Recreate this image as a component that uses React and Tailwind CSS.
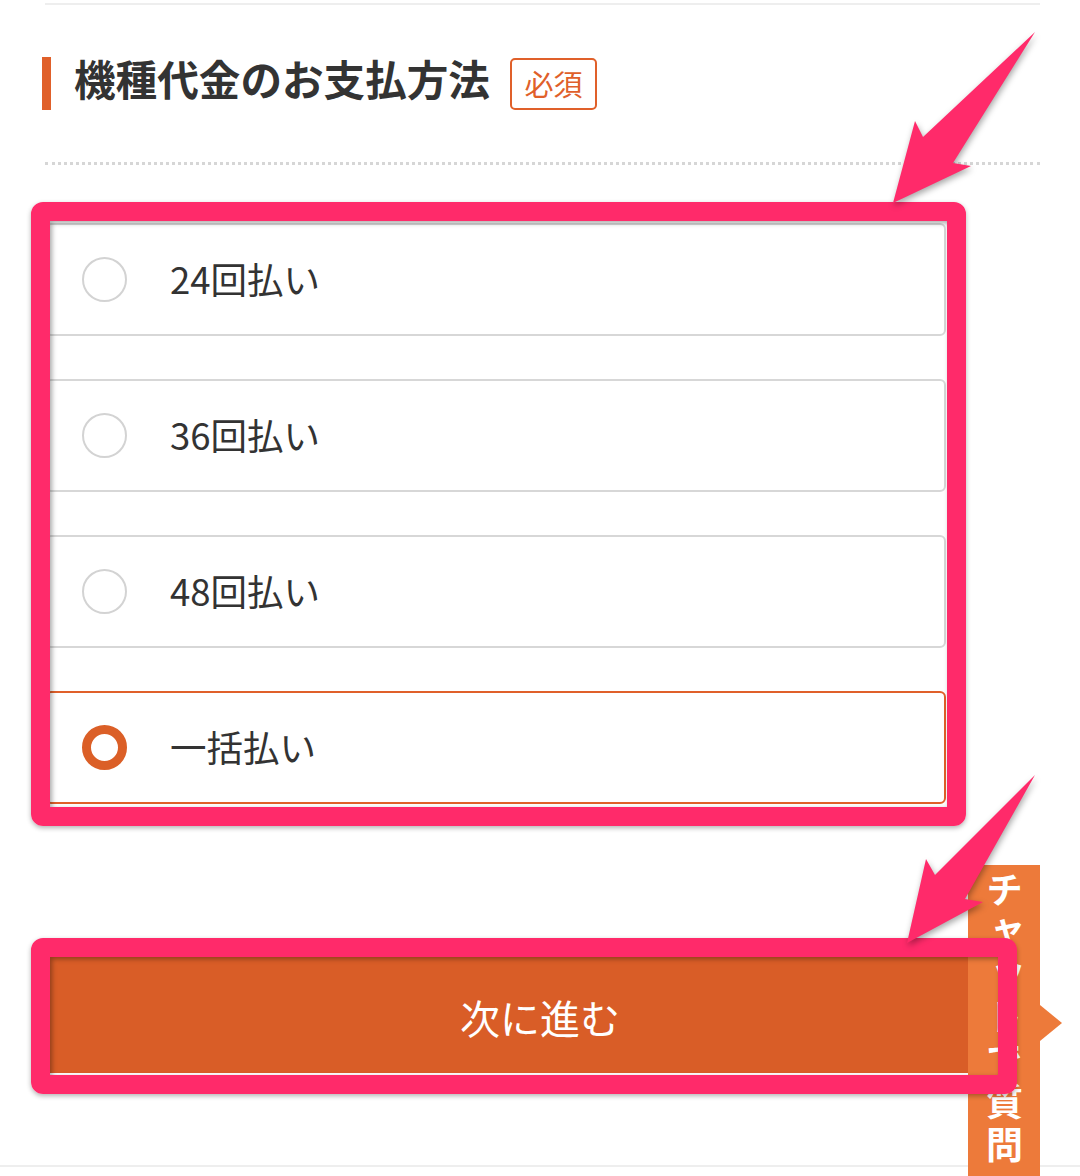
import React from "react";

const options = [
  { label: "24回払い", selected: false },
  { label: "36回払い", selected: false },
  { label: "48回払い", selected: false },
  { label: "一括払い", selected: true },
];

function Arrow({ points, className }) {
  return (
    <svg
      className={className}
      width="1080"
      height="1176"
      viewBox="0 0 1080 1176"
      style={{ filter: "drop-shadow(1px 3px 3px rgba(0,0,0,0.35))" }}
    >
      <polygon points={points} fill="#FF2A6A" />
    </svg>
  );
}

export default function App() {
  return (
    <div
      className="relative w-[1080px] h-[1176px] bg-white overflow-hidden text-[#333]"
      style={{ fontFamily: '"Noto Sans CJK JP", "Noto Sans", sans-serif' }}
    >
      {/* top rule */}
      <div className="ml-[45px] mr-[40px] mt-[3px] border-t-2 border-[#eeeeee]" />

      {/* header */}
      <div className="flex items-center ml-[42px] mt-[52px] h-[53px]">
        <div className="w-[9px] h-[53px] bg-[#E0602A]" />
        <h2 className="ml-[23px] mb-[10px] text-[41.6px] leading-none font-bold text-[#333]">
          機種代金のお支払方法
        </h2>
        <span className="ml-[20px] flex items-center justify-center w-[87px] h-[52px] border-2 border-[#E0602A] rounded-[5px] text-[29px] leading-none text-[#E0602A]">
          必須
        </span>
      </div>

      {/* dotted line */}
      <div className="ml-[45px] mr-[40px] mt-[52px] border-t-[3px] border-dotted border-[#d6d6d6]" />

      {/* options */}
      <div className="ml-[45px] mr-[134px] mt-[58px] flex flex-col gap-[43px]">
        {options.map((o) => (
          <label
            key={o.label}
            className={`flex items-center h-[113px] bg-white rounded-[6px] border-2 pl-[35px] ${
              o.selected ? "border-[#E0602A]" : "border-[#d7d7d7]"
            }`}
          >
            {o.selected ? (
              <span className="w-[45px] h-[45px] rounded-full border-[9px] border-[#DB5F27] bg-white" />
            ) : (
              <span className="w-[45px] h-[45px] rounded-full border-2 border-[#d3d3d3] bg-white" />
            )}
            <span className="ml-[43px] text-[36.5px] leading-none text-[#333]">{o.label}</span>
          </label>
        ))}
      </div>

      {/* next button */}
      <div className="ml-[45px] mr-[45px] mt-[152px]">
        <button className="w-full h-[117px] bg-[#D95D27] text-white text-[40px] leading-none flex items-center justify-center pt-[4px]">
          次に進む
        </button>
      </div>

      {/* bottom rule */}
      <div className="mt-[92px] border-t-2 border-[#eeeeee]" />

      {/* side chat tab */}
      <div className="absolute left-[968px] top-[865px] w-[72px] h-[320px] bg-[#ED7A3A] flex flex-col items-center pt-[6px]">
        <span
          className="text-white font-bold text-[37px] leading-[41px] tracking-[5.5px]"
          style={{ writingMode: "vertical-rl" }}
        >
          チャットで質問
        </span>
        <span className="absolute left-[72px] top-[140px] w-0 h-0 border-y-[18px] border-y-transparent border-l-[22px] border-l-[#ED7A3A]" />
      </div>

      {/* annotation boxes */}
      <div className="absolute left-[31px] top-[202px] w-[935px] h-[624px] border-[19px] border-[#FF2A6A] rounded-[12px] shadow-[0_2px_5px_rgba(0,0,0,0.3),inset_2px_2px_5px_rgba(0,0,0,0.35)]" />
      <div className="absolute left-[31px] top-[938px] w-[986px] h-[156px] border-[19px] border-[#FF2A6A] rounded-[12px] shadow-[0_2px_5px_rgba(0,0,0,0.3),inset_2px_2px_5px_rgba(0,0,0,0.35)]" />

      {/* arrows */}
      <Arrow
        className="absolute left-0 top-0 pointer-events-none"
        points="1035,32 953,163 971,166 893,203 915,121 923,137"
      />
      <Arrow
        className="absolute left-0 top-0 pointer-events-none"
        points="1035,775 965,899 983,902 907,943 926,859 935,875"
      />
    </div>
  );
}
